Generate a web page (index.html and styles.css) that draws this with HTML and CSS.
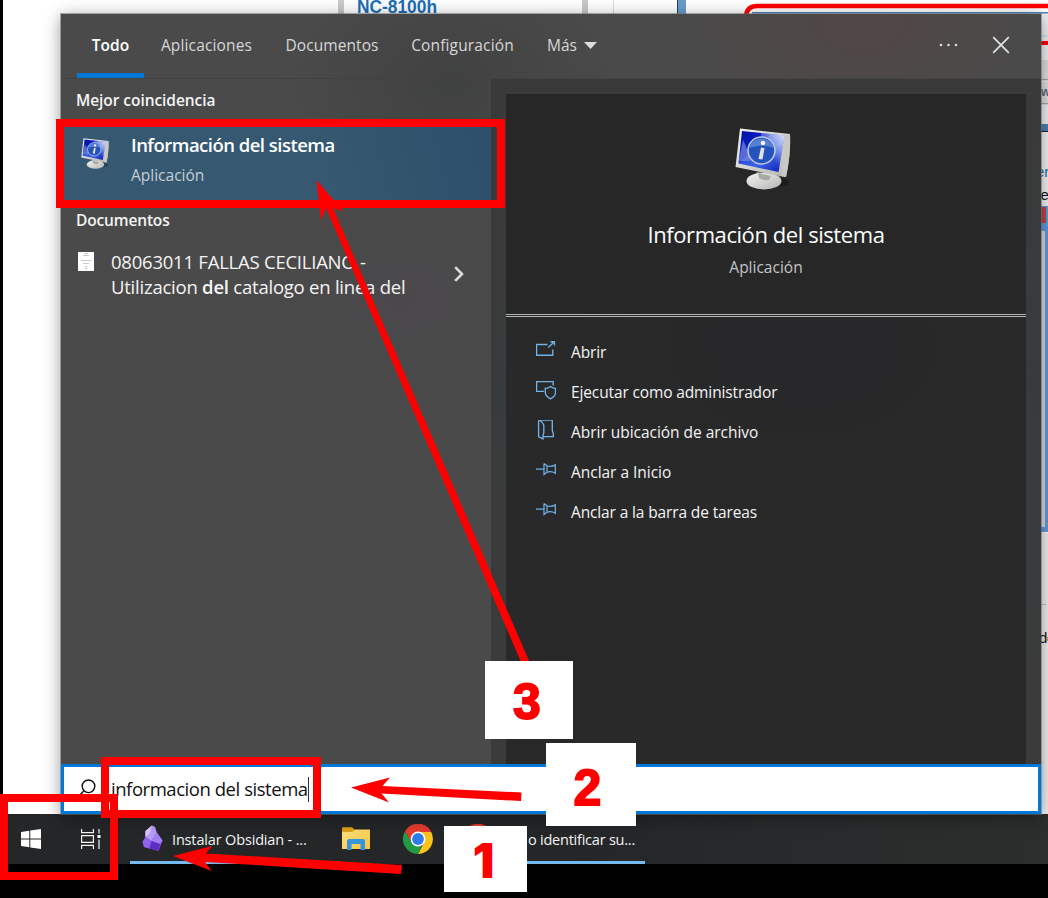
FILE: index.html
```html
<!DOCTYPE html>
<html lang="es">
<head>
<meta charset="utf-8">
<title>Información del sistema</title>
<link rel="stylesheet" href="styles.css">
</head>
<body>
<svg class="defs" width="0" height="0" aria-hidden="true">
  <defs>
    <linearGradient id="screen" x1="0" y1="0" x2="1" y2="1">
      <stop offset="0" stop-color="#0010a8"/><stop offset=".38" stop-color="#0a20c4"/><stop offset=".4" stop-color="#2c4cd8"/><stop offset=".6" stop-color="#3f66e2"/><stop offset="1" stop-color="#0818b4"/>
    </linearGradient>
    <linearGradient id="shine" x1=".3" y1="1" x2="1" y2="0">
      <stop offset=".3" stop-color="#fff" stop-opacity="0"/><stop offset="1" stop-color="#fff" stop-opacity=".85"/>
    </linearGradient>
    <linearGradient id="metal" x1="0" y1="0" x2="1" y2="1">
      <stop offset="0" stop-color="#f4f4f2"/><stop offset="1" stop-color="#b4b4b2"/>
    </linearGradient>
    <linearGradient id="folder" x1="0" y1="0" x2="1" y2="1">
      <stop offset="0" stop-color="#ffe07c"/><stop offset="1" stop-color="#f6c543"/>
    </linearGradient>
    <symbol id="monitor" viewBox="0 0 56 62">
      <ellipse cx="36" cy="54" rx="18" ry="5" fill="#000" opacity=".3"/>
      <path d="M22 44 L37 47 L38 54 L20 53Z" fill="#a5a5a3"/>
      <ellipse cx="29" cy="53" rx="17.500" ry="8.500" fill="url(#metal)"/>
      <path d="M23 45 L36 48 L34 52 Q28 53 24 50Z" fill="#a9a9a7"/>
      <path d="M5 0.500 L55 6 Q56 26 51 49 L47 48.500 L0.500 39Z" fill="url(#metal)"/>
      <path d="M50 8 L55 6 Q56 26 51 49 L46 48Z" fill="#c8c8c4"/>
      <path d="M7 3 L49.500 7.500 L43.500 44 L3.500 35.500Z" fill="url(#screen)"/>
      <path d="M26 5 L49.500 7.500 L43.500 44 L25 40Z" fill="url(#shine)"/>
      <path d="M8 12 Q13 21 15 33 L3.500 33Z" fill="#7f92e6" opacity=".65"/>
      <circle cx="26.500" cy="22.500" r="13.500" fill="#2453bb" stroke="#bcc8e4" stroke-width="1.600"/>
      <path d="M14 20 A13 13 0 0 1 39 20 Q27 15 14 20Z" fill="#7fa5ea" opacity=".55"/>
      <circle cx="28" cy="15" r="2.300" fill="#f4f4f4"/>
      <path d="M26 19.500 L29.500 20 L27.500 31.500 L23.500 31Z" fill="#e2e2e0"/>
    </symbol>
    <symbol id="pin" viewBox="0 0 20 20">
      <path d="M0 9H7.500M8 3.500V14.500L11 12.300Q15 10.500 19.300 13.100V4.900Q15 7.500 11 5.700L8 3.500M11 5.500V12.500" fill="none" stroke="#71b2e8" stroke-width="1.250"/>
    </symbol>
    <symbol id="chrome" viewBox="0 0 30 30">
      <path d="M15 15 L2 7.500 A15 15 0 0 1 28 7.500Z" fill="#e33b2e"/>
      <path d="M15 8 H28.200 A15 15 0 0 1 15 30 L21 18.500Z" fill="#fcc31e"/>
      <path d="M2 7.500 L9 18.700 Q12 22 15 22 L19 21.700 L15 30 A15 15 0 0 1 2 7.500Z" fill="#229a46"/>
      <path d="M2 7.500 A15 15 0 0 1 28.200 8 H15 L9 18.700Z" fill="#e33b2e"/>
      <circle cx="15" cy="15" r="7.400" fill="#fff"/><circle cx="15" cy="15" r="5.900" fill="#2e7bee"/>
    </symbol>
  </defs>
</svg>

<main class="desktop">
  <div class="page">
    <svg class="page-art" width="1048" height="814" viewBox="0 0 1048 814">
      <path d="M341 0V16M585 0V16" stroke="#c9c9c9" stroke-width="6"/>
      <path d="M613.500 0V16" stroke="#dcdcdc"/>
      <path d="M678 0H686V16H678Z" fill="#689dcc"/><path d="M677.500 0V16" stroke="#27425c"/>
      <text x="357" y="13" class="page-model" textLength="80" lengthAdjust="spacingAndGlyphs">NC-8100h</text>
      <path d="M752 16V13.500H1048V16Z" fill="#f4f8fc"/><path d="M752 12.800H1048" stroke="#4b84bb" stroke-width="1.500"/>
      <path d="M746 16 Q747 6 757 6H1048" fill="none" stroke="#f00" stroke-width="4.500"/>
      <g>
        <path d="M1041 14H1048V125H1041Z" fill="#eeeff0"/>
        <path d="M1041 36H1048" stroke="#b8dbe8"/>
        <path d="M1041 41H1048V45H1041Z" fill="#f00"/>
        <path d="M1041 60H1048V78H1041ZM1041 82H1048V102H1041Z" fill="#dedede"/>
        <path d="M1041 79.500H1048M1041 103.500H1048" stroke="#a3a3a3" stroke-width="1.500"/>
        <text x="1041" y="96" class="page-small tone-slate">w</text>
        <path d="M1041 124H1048V131H1041Z" fill="#4580b4"/>
        <path d="M1041 131.500H1048" stroke="#1b2733"/>
        <path d="M1041 132H1048V206H1041Z" fill="#f3f3f3"/>
        <text x="1036" y="177" class="page-small tone-link">er</text>
        <text x="1040.500" y="200" class="page-small">e</text>
        <path d="M1041 206H1048V532H1041Z" fill="#609ae0"/>
        <path d="M1041 207H1046V223H1041Z" fill="#bd4347"/>
        <path d="M1041 231H1045V527H1041Z" fill="#d8dde0"/>
        <path d="M1041 533H1048V814H1041Z" fill="#f0f0f0"/>
        <path d="M1041 604.500H1046" stroke="#aaa" stroke-dasharray="2 1"/>
        <text x="1039" y="643" class="page-small">d</text><path d="M1047 637H1048V641H1047Z" fill="#d8a045"/>
      </g>
    </svg>
  </div>

  <section class="search-panel">
    <header class="tabs">
      <div class="tab tab-all"><span>Todo</span></div>
      <div class="tab tab-apps"><span>Aplicaciones</span></div>
      <div class="tab tab-docs"><span>Documentos</span></div>
      <div class="tab tab-config"><span>Configuración</span></div>
      <div class="tab tab-more"><span>Más</span><svg width="13" height="7" viewBox="0 0 13 7"><path d="M0 0H13L6.500 7Z" fill="#ddd"/></svg></div>
      <div class="window-actions">
        <svg width="19" height="4" viewBox="0 0 19 4" fill="#ddd"><circle cx="2" cy="2" r="1.300"/><circle cx="9.500" cy="2" r="1.300"/><circle cx="17" cy="2" r="1.300"/></svg>
        <svg width="18" height="18" viewBox="0 0 18 18"><path d="M1.200 1.200L16.800 16.800M16.800 1.200L1.200 16.800" stroke="#e2e2e2" stroke-width="1.700"/></svg>
      </div>
    </header>

    <div class="panel-body">
      <div class="results">
        <h2 class="group-title">Mejor coincidencia</h2>
        <div class="best-match">
          <svg class="match-icon" width="28" height="31"><use href="#monitor"/></svg>
          <div class="match-text">
            <div class="match-name">Información del sistema</div>
            <div class="match-kind">Aplicación</div>
          </div>
        </div>
        <h2 class="group-title group-docs">Documentos</h2>
        <div class="document">
          <svg class="doc-icon" width="16" height="19" viewBox="0 0 16 19"><path d="M0 0H16V19H0Z" fill="#fff"/><path d="M6 1.500H10M5 3.500H11M3 8.500H13M5 11.500H11M7 14.500H9M7 16.500H9" stroke="#bbb" stroke-width=".8"/></svg>
          <div class="doc-text">
            <div>08063011 FALLAS CECILIANO -</div>
            <div>Utilizacion <b>del</b> catalogo en linea del</div>
          </div>
          <svg class="chevron" width="10" height="16" viewBox="0 0 10 16"><path d="M1.200 1.200L8 8L1.200 14.800" fill="none" stroke="#ddd" stroke-width="2.600"/></svg>
        </div>
      </div>

      <div class="preview-area">
        <div class="preview">
          <div class="preview-head">
            <svg class="preview-icon" width="56" height="62"><use href="#monitor"/></svg>
            <div class="preview-name">Información del sistema</div>
            <div class="preview-kind">Aplicación</div>
          </div>
          <ul class="actions">
            <li><svg width="20" height="20" viewBox="0 0 20 20"><path d="M11.500 4.500H.600V15.200H16.800V9.500M12.300 7.600L18 2M14.500 1.700H18.400V5.500" fill="none" stroke="#71b2e8" stroke-width="1.350"/></svg><span>Abrir</span></li>
            <li><svg width="20" height="20" viewBox="0 0 20 20"><path d="M8 11.300H.600V1.600H17.200V5.500M14.500 6.500Q12 8.500 9.300 8.300V12.500Q9.600 16.500 14.500 18.800Q19.200 16.500 19.500 12.500V8.300Q17 8.500 14.500 6.500Z" fill="none" stroke="#71b2e8" stroke-width="1.350"/></svg><span>Ejecutar como administrador</span></li>
            <li class="wide"><svg width="20" height="20" viewBox="0 1 20 20"><path d="M3.500 .600H16.300V11.500L17.300 14V17.200H7.500M3.500 .600L2.600 1.600V17.500L7 19.500V16L7.800 13.500V6Q7.500 4 3.500 .600Z" fill="none" stroke="#71b2e8" stroke-width="1.350" transform="translate(0 .4)"/></svg><span>Abrir ubicación de archivo</span></li>
            <li class="wide"><svg width="20" height="20"><use href="#pin"/></svg><span>Anclar a Inicio</span></li>
            <li><svg width="20" height="20"><use href="#pin"/></svg><span>Anclar a la barra de tareas</span></li>
          </ul>
        </div>
      </div>
    </div>

    <div class="search-box">
      <svg width="18" height="18" viewBox="0 0 18 18"><circle cx="10.500" cy="7.300" r="6.300" fill="none" stroke="#111" stroke-width="1.400"/><path d="M6 11.800L1 17" stroke="#111" stroke-width="1.500"/></svg>
      <span class="query">informacion del sistema</span><i class="caret"></i>
    </div>
  </section>

  <footer class="taskbar">
    <div class="start"><svg width="20" height="20" viewBox="0 0 20 20" fill="#fff"><path d="M0 3L8.300 1.800V9.400H0ZM9.300 1.600L20 0V9.400H9.300ZM0 10.400H8.300V18.200L0 17ZM9.300 10.400H20V20L9.300 18.400Z"/></svg></div>
    <div class="task-view"><svg width="20" height="20" viewBox="0 0 20 20"><path d="M.600 0V3.600H12.400V0M.600 6.600H12.400V13.400H.600ZM.600 20V16.400H12.400V20M18 0V4.500M18 10.500V20" fill="none" stroke="#f5f5f5" stroke-width="1.200"/><path d="M16.500 6H19.500V9H16.500Z" fill="#fff"/></svg></div>
    <div class="task task-obsidian">
      <svg width="21" height="27" viewBox="0 0 21 27"><path d="M10 .500L13 2L14.500 7L20.500 15.500L16.500 26L11 24.500L2 22L.500 17L3.500 12V6Z" fill="#8055dd"/><path d="M10 .500L13 2L14.500 7L9.500 16L3.500 12V6Z" fill="#b49cf3"/><path d="M14.500 7L20.500 15.500L18 19L9.500 16Z" fill="#a17ff0"/><path d="M10 .500L8 8L3.500 12V6Z" fill="#d5c8fa"/><path d="M3.500 12L9.500 16L7.500 23.500L2 22L.500 17Z" fill="#8d63eb"/><path d="M9.500 16L18 19L16.500 26L7.500 23.500Z" fill="#5d2ec3"/></svg>
      <span>Instalar Obsidian - ...</span>
    </div>
    <div class="task-explorer"><svg width="28" height="24" viewBox="0 0 28 24"><path d="M0 1Q0 .300 1 .300H10L13 3H27.500V8H0Z" fill="#dda018"/><path d="M0 5H10L13 2.500H28V22H0Z" fill="url(#folder)"/><path d="M5 23V14Q5 12 7 12H21Q23 12 23 14V23H18.500V17H9.500V23Z" fill="#3594dc"/></svg></div>
    <div class="task-chrome"><svg width="30" height="30"><use href="#chrome"/></svg></div>
    <div class="task task-browser">
      <svg width="30" height="30"><use href="#chrome"/></svg>
      <span>o identificar su...</span>
    </div>
  </footer>

  <svg class="arrows" width="1048" height="898" viewBox="0 0 1048 898" fill="#f00">
    <path d="M316.500 180L343.500 211.500L333 208L529.500 662H521L326 208L320.700 220Z"/>
    <path d="M351 787.500L390 777.500L382.500 786L521.500 792.500L521 801L381.500 793.500L389 802.500Z"/>
    <path d="M173 856L212 846L206 853.500L402 865L401 874L205 862L211.500 871Z"/>
  </svg>
  <div class="mark mark-match"></div>
  <div class="mark mark-query"></div>
  <div class="mark mark-start"></div>
  <div class="step step-three">3</div>
  <div class="step step-two">2</div>
  <div class="step step-one">1</div>
</main>
</body>
</html>
```
FILE: styles.css
```css
* { box-sizing: border-box; }
body { margin: 0; background: #000; font-family: "Open Sans", "Noto Sans", sans-serif; font-size: 15.5px; color: #f4f4f4; }
.defs { position: absolute; }
svg { display: block; flex: none; }
span { white-space: nowrap; }
.desktop { position: relative; width: 1048px; height: 898px; overflow: hidden; background: #000; display: flex; flex-direction: column; }

.page { height: 814px; flex: none; background: #fff; border-left: 3px solid #000; }
.page-art { margin-left: -3px; }
.page-model { font: bold 18px "Liberation Sans", sans-serif; fill: #1a6eb6; }
.page-small { font: 15px "Liberation Sans", sans-serif; fill: #111; }
.page-small.tone-slate { fill: #556880; font-weight: bold; font-size: 12px; }
.page-small.tone-link { fill: #1c6bb0; }

.search-panel {
  position: absolute; left: 61px; top: 14px; width: 980px; height: 800px;
  display: flex; flex-direction: column;
  background:
    radial-gradient(ellipse 180px 110px at 800px 10px, rgba(95, 62, 62, .32), transparent),
    radial-gradient(ellipse 170px 120px at 390px 70px, rgba(48, 52, 50, .4), transparent),
    #4a4a4a;
  box-shadow: 0 0 0 1px rgba(110, 110, 110, .55), 0 3px 16px rgba(0, 0, 0, .42);
}
.tabs { height: 65px; flex: none; display: flex; padding-left: 16px; border-bottom: 1px solid #414141; }
.tab { display: flex; align-items: center; justify-content: center; height: 64px; padding-bottom: 2px; color: #d7d7d7; letter-spacing: .15px; }
.tab-all { width: 67px; padding-bottom: 0; padding-top: 3px; color: #fff; font-weight: 600; border-bottom: 5px solid #0078d7; letter-spacing: 0; }
.tab-apps { width: 125px; }
.tab-docs { width: 126px; letter-spacing: .08px; }
.tab-config { width: 135px; }
.tab-more { padding-left: 17px; gap: 7px; letter-spacing: 0; }
.window-actions { display: flex; align-items: center; gap: 34px; margin-left: auto; padding: 0 31px 2px 0; }

.panel-body { display: flex; height: 685px; flex: none; }
.results { width: 430px; background: radial-gradient(ellipse 180px 110px at 340px 220px, rgba(75, 66, 76, .25), transparent); }
.group-title { margin: 0; height: 43px; padding-left: 15px; font-size: 15.5px; font-weight: 600; line-height: 43px; letter-spacing: -.06px; }
.best-match { display: flex; height: 80px; padding-left: 20px; background: linear-gradient(75deg, #365871 60%, #2c506a); }
.match-icon { margin-top: 16px; }
.match-text { padding: 8px 0 0 22px; }
.match-name { font-size: 18.500px; font-weight: 600; line-height: 30px; letter-spacing: -.52px; color: #fff; }
.match-kind { line-height: 30px; color: #c5ced5; }
.group-docs { height: 47px; line-height: 37px; letter-spacing: -.15px; }
.document { display: flex; padding-left: 17px; }
.doc-icon { margin-top: 3px; }
.doc-text { width: 330px; margin-left: 17px; font-size: 18.500px; line-height: 25px; letter-spacing: -.23px; white-space: nowrap; }
.doc-text b { font-weight: 600; }
.chevron { margin: 17px 0 0 13px; }

.preview-area { width: 550px; padding: 15px 15px 0; background: linear-gradient(#3a3a3a, #383b3d 45%, #3b3b3b); }
.preview { height: 670px; background: radial-gradient(ellipse 320px 210px at 300px 250px, rgba(35, 37, 42, .35), transparent), #292929; }
.preview-head { height: 223px; display: flex; flex-direction: column; align-items: center; padding-top: 34px; background: rgba(36, 36, 36, .35); border-bottom: 3px double #b5b5b5; }
.preview-icon { margin-right: 6px; }
.preview-name { margin-top: 28px; font-size: 22px; line-height: 32px; letter-spacing: -.43px; color: #fff; }
.preview-kind { margin-top: 1px; line-height: 32px; color: #c4c4c4; }
.actions { list-style: none; margin: 0; padding: 15px 0 0 30px; }
.actions li { display: flex; align-items: center; height: 40px; gap: 15px; line-height: 40px; letter-spacing: -.13px; }
.actions li.wide { letter-spacing: -.03px; }
.actions li svg { margin-top: -5px; }

.search-box { height: 50px; flex: none; display: flex; align-items: center; padding-left: 14px; border: 3px solid #0078d7; background: #fff; color: #111; }
.search-box svg { margin-top: -3px; }
.query { margin-left: 15px; font-size: 18.500px; line-height: 44px; letter-spacing: -.45px; }
.caret { width: 1px; height: 25px; margin-left: 0; background: #333; }

.taskbar { height: 50px; flex: none; display: flex; align-items: center; background: linear-gradient(90deg, #242628, #252628 55%, #2c2e2e); }
.start { padding-left: 21px; }
.task-view { margin-left: 40px; }
.task { display: flex; align-items: center; height: 50px; border-bottom: 3px solid #76b9ed; padding-top: 2px; font-size: 14.500px; }
.task span { margin-top: 2px; }
.task-obsidian { width: 188px; margin-left: 29px; padding-left: 12px; gap: 9px; letter-spacing: -.16px; }
.task-explorer { margin-left: 24px; }
.task-chrome { margin-left: 33px; }
.task-browser { width: 192px; margin-left: 20px; padding-left: 10px; gap: 35px; letter-spacing: -.23px; }

.arrows { position: absolute; left: 0; top: 0; }
.mark { position: absolute; border: 8px solid #f00; }
.mark-match { left: 56px; top: 119px; width: 449px; height: 89px; }
.mark-query { left: 101px; top: 757px; width: 220px; height: 61px; }
.mark-start { left: 0; top: 794px; width: 118px; height: 86px; }
.step { position: absolute; display: flex; align-items: center; justify-content: center; background: #fff; color: #f00; font: bold 50px/1 "Liberation Sans", sans-serif; -webkit-text-stroke: 1.8px #f00; }
.step-three { left: 485px; top: 661px; width: 88px; height: 78px; padding: 4px 4px 0 0; }
.step-two { left: 546px; top: 743px; width: 90px; height: 83px; padding: 6px 7px 0 0; }
.step-one { left: 444px; top: 826px; width: 83px; height: 66px; padding: 4px 4px 0 0; font: 900 48px/1 Inter, sans-serif; -webkit-text-stroke: 0; }
```
